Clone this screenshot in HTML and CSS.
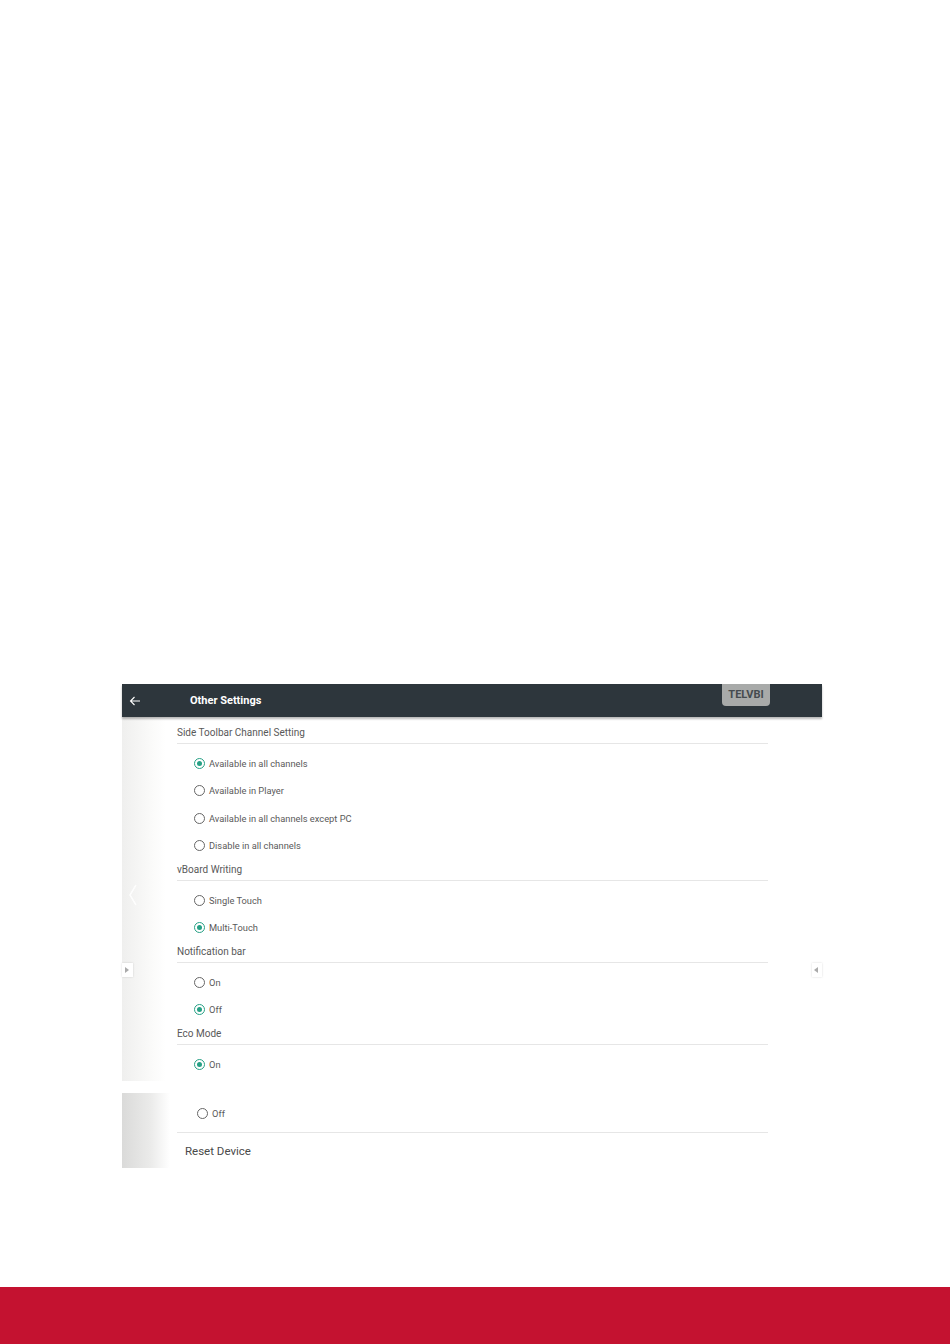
FILE: index.html
```html
<!DOCTYPE html>
<html lang="en">
<head>
	<meta charset="UTF-8">
	<title>Other Settings</title>
	<link rel="stylesheet" href="styles.css">
</head>
<body>
<div class="page">
	<div class="shot">
		<div class="bar">
			<svg class="back" width="12" height="10" viewBox="0 0 12 10"><path d="M11 5H1.5M5.5 1L1.5 5l4 4" fill="none" stroke="#fff" stroke-width="1.1"/></svg>
			<span class="bar-title">Other Settings</span>
			<span class="badge">TELVBI</span>
		</div>
		<div class="body">
			<div class="strip"></div>
			<div class="list">
				<div class="head first">Side Toolbar Channel Setting</div>
				<div class="group">
					<div class="opt on"><i></i>Available in all channels</div>
					<div class="opt"><i></i>Available in Player</div>
					<div class="opt"><i></i>Available in all channels except PC</div>
					<div class="opt"><i></i>Disable in all channels</div>
				</div>
				<div class="head">vBoard Writing</div>
				<div class="group">
					<div class="opt"><i></i>Single Touch</div>
					<div class="opt on"><i></i>Multi-Touch</div>
				</div>
				<div class="head">Notification bar</div>
				<div class="group">
					<div class="opt"><i></i>On</div>
					<div class="opt on"><i></i>Off</div>
				</div>
				<div class="head">Eco Mode</div>
				<div class="group">
					<div class="opt on"><i></i>On</div>
				</div>
			</div>
		</div>
		<svg class="chev" width="10" height="22" viewBox="0 0 10 22"><path d="M8 1L2 11l6 10" fill="none" stroke="#fff" stroke-width="1.5"/></svg>
		<span class="tab tab-left"></span>
		<span class="tab tab-right"></span>
	</div>

	<div class="shot2">
		<div class="strip2"></div>
		<div class="list2">
			<div class="opt opt2"><i></i>Off</div>
			<div class="reset">Reset Device</div>
		</div>
	</div>

	<div class="footer"></div>
</div>
</body>
</html>
```

FILE: styles.css
```css
html, body { margin: 0; padding: 0; }

body {
	background: #fff;
	font-family: Roboto, "Liberation Sans", sans-serif;
	color: #555;
}

.page {
	height: 1344px;
	display: flex;
	flex-direction: column;
}

.shot {
	position: relative;
	margin: 684px 0 0 122px;
	width: 700px;
	height: 397px;
	display: flex;
	flex-direction: column;
}

.bar {
	height: 33px;
	background: #2d363c;
	display: flex;
	align-items: center;
	box-shadow: 0 2px 2px rgba(0, 0, 0, 0.28);
	position: relative;
	z-index: 1;
}

.back { margin-left: 7px; }

.bar-title {
	margin-left: 49px;
	color: #fff;
	font-size: 11px;
	font-weight: bold;
}

.badge {
	align-self: flex-start;
	margin-left: auto;
	margin-right: 52px;
	width: 48px;
	height: 22px;
	line-height: 22px;
	text-align: center;
	background: #a8aaa9;
	color: #454b4f;
	font-size: 11px;
	font-weight: bold;
	border-radius: 0 0 4px 4px;
}

.body {
	flex: 1;
	display: flex;
}

.strip {
	width: 44px;
	background: linear-gradient(to right, #efefee, #fbfbfa 70%, #fff);
}

.list {
	margin-left: 11px;
	width: 591px;
}

.head {
	font-size: 10px;
	line-height: 12px;
	padding: 4.5px 0 4px 0;
	border-bottom: 1px solid #e6e6e6;
	color: #595959;
}

.head.first { padding-top: 10px; }

.group { padding: 5.5px 0 0 17px; }

.opt {
	height: 27.5px;
	display: flex;
	align-items: center;
	font-size: 9.3px;
	color: #5a5a5a;
}

.opt i {
	width: 9px;
	height: 9px;
	border: 1px solid #666;
	border-radius: 50%;
	margin-right: 4px;
	box-sizing: content-box;
	position: relative;
}

.opt.on i { border-color: #26a085; }

.opt.on i::after {
	content: "";
	position: absolute;
	left: 2px;
	top: 2px;
	width: 5px;
	height: 5px;
	border-radius: 50%;
	background: #26a085;
}

.chev {
	position: absolute;
	left: 6px;
	top: 200px;
	opacity: 0.9;
}

.tab {
	position: absolute;
	top: 279px;
	width: 11px;
	height: 14px;
	background: #fff;
	box-shadow: 0 0 2px rgba(0, 0, 0, 0.15);
}

.tab-left { left: 0; }
.tab-right { right: 0; width: 10px; }

.tab::after {
	content: "";
	position: absolute;
	top: 4px;
	border-top: 3px solid transparent;
	border-bottom: 3px solid transparent;
}

.tab-left::after { left: 3px; border-left: 4px solid #aaa; }
.tab-right::after { right: 4px; border-right: 4px solid #aaa; }

.shot2 {
	margin: 12px 0 0 122px;
	width: 700px;
	height: 75px;
	display: flex;
}

.strip2 {
	width: 48px;
	background: linear-gradient(to right, #dadad9, #ebebea 60%, #fff);
}

.list2 {
	margin-left: 7px;
	width: 591px;
}

.opt2 {
	height: 40px;
	padding: 2px 0 0 20px;
	box-sizing: border-box;
	border-bottom: 1px solid #e6e6e6;
}

.reset {
	padding: 11px 0 0 8px;
	font-size: 11.5px;
	line-height: 14px;
	color: #4a4a4a;
}

.footer {
	margin-top: auto;
	height: 57px;
	background: #c41230;
}
```
